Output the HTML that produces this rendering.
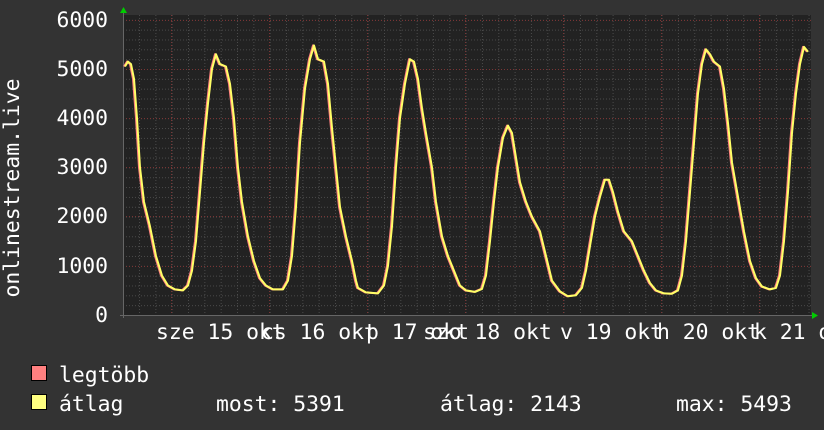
<!DOCTYPE html>
<html><head><meta charset="utf-8"><style>
html,body{margin:0;padding:0;background:#333;width:824px;height:430px;overflow:hidden}
svg text{font-family:"DejaVu Sans Mono","Liberation Mono",monospace;fill:#fff;font-size:21.4px}
</style></head><body>
<svg width="824" height="430" xmlns="http://www.w3.org/2000/svg">
<defs>
<pattern id="hmin" width="824" height="9.84" patternUnits="userSpaceOnUse" y="315">
<line x1="0" y1="0.5" x2="824" y2="0.5" stroke="#4a4a4a" stroke-dasharray="1,2"/>
</pattern>
<pattern id="vmin" width="16.33" height="430" patternUnits="userSpaceOnUse" x="122.7">
<line x1="0.5" y1="0" x2="0.5" y2="430" stroke="#4a4a4a" stroke-dasharray="1,2"/>
</pattern>
</defs>
<rect x="123" y="15" width="688" height="300" fill="#222"/>
<rect x="123" y="15" width="688" height="300" fill="url(#hmin)"/>
<rect x="123" y="15" width="688" height="300" fill="url(#vmin)"/>
<g stroke="#7a3535" stroke-dasharray="1,2">
<line x1="123" y1="20.5" x2="811" y2="20.5"/><line x1="123" y1="69.5" x2="811" y2="69.5"/>
<line x1="123" y1="118.5" x2="811" y2="118.5"/><line x1="123" y1="167.5" x2="811" y2="167.5"/>
<line x1="123" y1="216.5" x2="811" y2="216.5"/><line x1="123" y1="266.5" x2="811" y2="266.5"/>
<line x1="171.5" y1="15" x2="171.5" y2="315"/><line x1="269.5" y1="15" x2="269.5" y2="315"/>
<line x1="367.5" y1="15" x2="367.5" y2="315"/><line x1="465.5" y1="15" x2="465.5" y2="315"/>
<line x1="563.5" y1="15" x2="563.5" y2="315"/><line x1="661.5" y1="15" x2="661.5" y2="315"/>
<line x1="759.5" y1="15" x2="759.5" y2="315"/>
</g>
<line x1="123.5" y1="12" x2="123.5" y2="318" stroke="#666"/>
<line x1="120" y1="315.5" x2="814" y2="315.5" stroke="#666"/>
<polygon points="120,13 127,13 123.5,7" fill="#0c0"/>
<polygon points="812,312 812,319 818,315.5" fill="#0c0"/>
<g fill="none" stroke-width="2" stroke-linejoin="round">
<polyline stroke="#ff8080" transform="translate(-1,0)" points="125,66.5 128,61.6 131,64.1 134,78.8 137,118.2 140,167.4 144,201.8 150,226.4 156,256 162,275.6 168,285.5 175,289.4 183,290.4 188,285.5 192,270.7 196,241.2 200,192 204,142.8 208,103.4 212,69 216,54.2 220,64.1 226,66.5 230,83.8 234,118.2 238,167.4 242,201.8 248,236.3 254,260.9 260,278.1 266,285.5 273,289.4 283,289.4 288,280.6 292,256 296,206.8 300,142.8 305,88.7 310,59.2 314,45.4 318,59.2 324,61.6 328,83.8 332,128 336,167.4 340,206.8 346,236.3 352,260.9 356,280.6 358,287.9 366,292.4 378,293.4 384,285.5 388,265.8 392,226.4 396,167.4 400,118.2 405,83.8 410,59.2 414,61.6 418,78.8 422,108.4 426,133 432,167.4 436,201.8 442,236.3 448,256 454,270.7 460,285.5 466,290.4 475,291.9 482,288.9 486,275.6 490,241.2 494,201.8 498,167.4 503,137.9 508,125.6 512,133 516,157.6 520,182.2 526,201.8 532,216.6 540,231.4 546,256 552,280.6 560,291.4 568,296.3 576,295.3 582,287.9 586,270.7 590,246.1 595,216.6 600,196.9 605,179.7 609,179.7 613,192 618,211.7 624,231.4 632,241.2 638,256 644,270.7 650,283 656,290.4 664,293.4 672,293.8 678,290.4 682,275.6 686,241.2 690,192 694,142.8 698,93.6 702,64.1 706,49.3 710,54.2 714,61.6 720,66.5 724,88.7 728,123.1 732,162.5 738,196.9 744,231.4 750,260.9 756,278.1 762,286.5 770,289.4 776,287.9 780,275.6 784,241.2 788,192 792,133 796,93.6 800,64.1 804,46.9 808,51.8"/>
<polyline stroke="#ffff66" points="125,66.5 128,61.6 131,64.1 134,78.8 137,118.2 140,167.4 144,201.8 150,226.4 156,256 162,275.6 168,285.5 175,289.4 183,290.4 188,285.5 192,270.7 196,241.2 200,192 204,142.8 208,103.4 212,69 216,54.2 220,64.1 226,66.5 230,83.8 234,118.2 238,167.4 242,201.8 248,236.3 254,260.9 260,278.1 266,285.5 273,289.4 283,289.4 288,280.6 292,256 296,206.8 300,142.8 305,88.7 310,59.2 314,45.4 318,59.2 324,61.6 328,83.8 332,128 336,167.4 340,206.8 346,236.3 352,260.9 356,280.6 358,287.9 366,292.4 378,293.4 384,285.5 388,265.8 392,226.4 396,167.4 400,118.2 405,83.8 410,59.2 414,61.6 418,78.8 422,108.4 426,133 432,167.4 436,201.8 442,236.3 448,256 454,270.7 460,285.5 466,290.4 475,291.9 482,288.9 486,275.6 490,241.2 494,201.8 498,167.4 503,137.9 508,125.6 512,133 516,157.6 520,182.2 526,201.8 532,216.6 540,231.4 546,256 552,280.6 560,291.4 568,296.3 576,295.3 582,287.9 586,270.7 590,246.1 595,216.6 600,196.9 605,179.7 609,179.7 613,192 618,211.7 624,231.4 632,241.2 638,256 644,270.7 650,283 656,290.4 664,293.4 672,293.8 678,290.4 682,275.6 686,241.2 690,192 694,142.8 698,93.6 702,64.1 706,49.3 710,54.2 714,61.6 720,66.5 724,88.7 728,123.1 732,162.5 738,196.9 744,231.4 750,260.9 756,278.1 762,286.5 770,289.4 776,287.9 780,275.6 784,241.2 788,192 792,133 796,93.6 800,64.1 804,46.9 808,51.8"/>
</g>
<g text-anchor="end">
<text x="108" y="27">6000</text><text x="108" y="76">5000</text>
<text x="108" y="125">4000</text><text x="108" y="174">3000</text>
<text x="108" y="223">2000</text><text x="108" y="273">1000</text>
<text x="108" y="322">0</text>
</g>
<text transform="translate(19,188) rotate(-90)" text-anchor="middle">onlinestream.live</text>
<g>
<text x="156" y="339">sze 15 okt</text>
<text x="261" y="339">cs 16 okt</text>
<text x="366" y="339">p 17 okt</text>
<text x="423" y="339">szo 18 okt</text>
<text x="560" y="339">v 19 okt</text>
<text x="657" y="339">h 20 okt</text>
<text x="754" y="339">k 21 o</text>
</g>
<rect x="31.5" y="365.5" width="15" height="15" fill="#ff8080" stroke="#000"/>
<rect x="31.5" y="394.5" width="15" height="15" fill="#ffff80" stroke="#000"/>
<text x="59" y="382">legtöbb</text>
<text x="59" y="411">átlag</text>
<text x="216" y="411">most: 5391</text>
<text x="440" y="411">átlag: 2143</text>
<text x="676" y="411">max: 5493</text>
</svg>
</body></html>
